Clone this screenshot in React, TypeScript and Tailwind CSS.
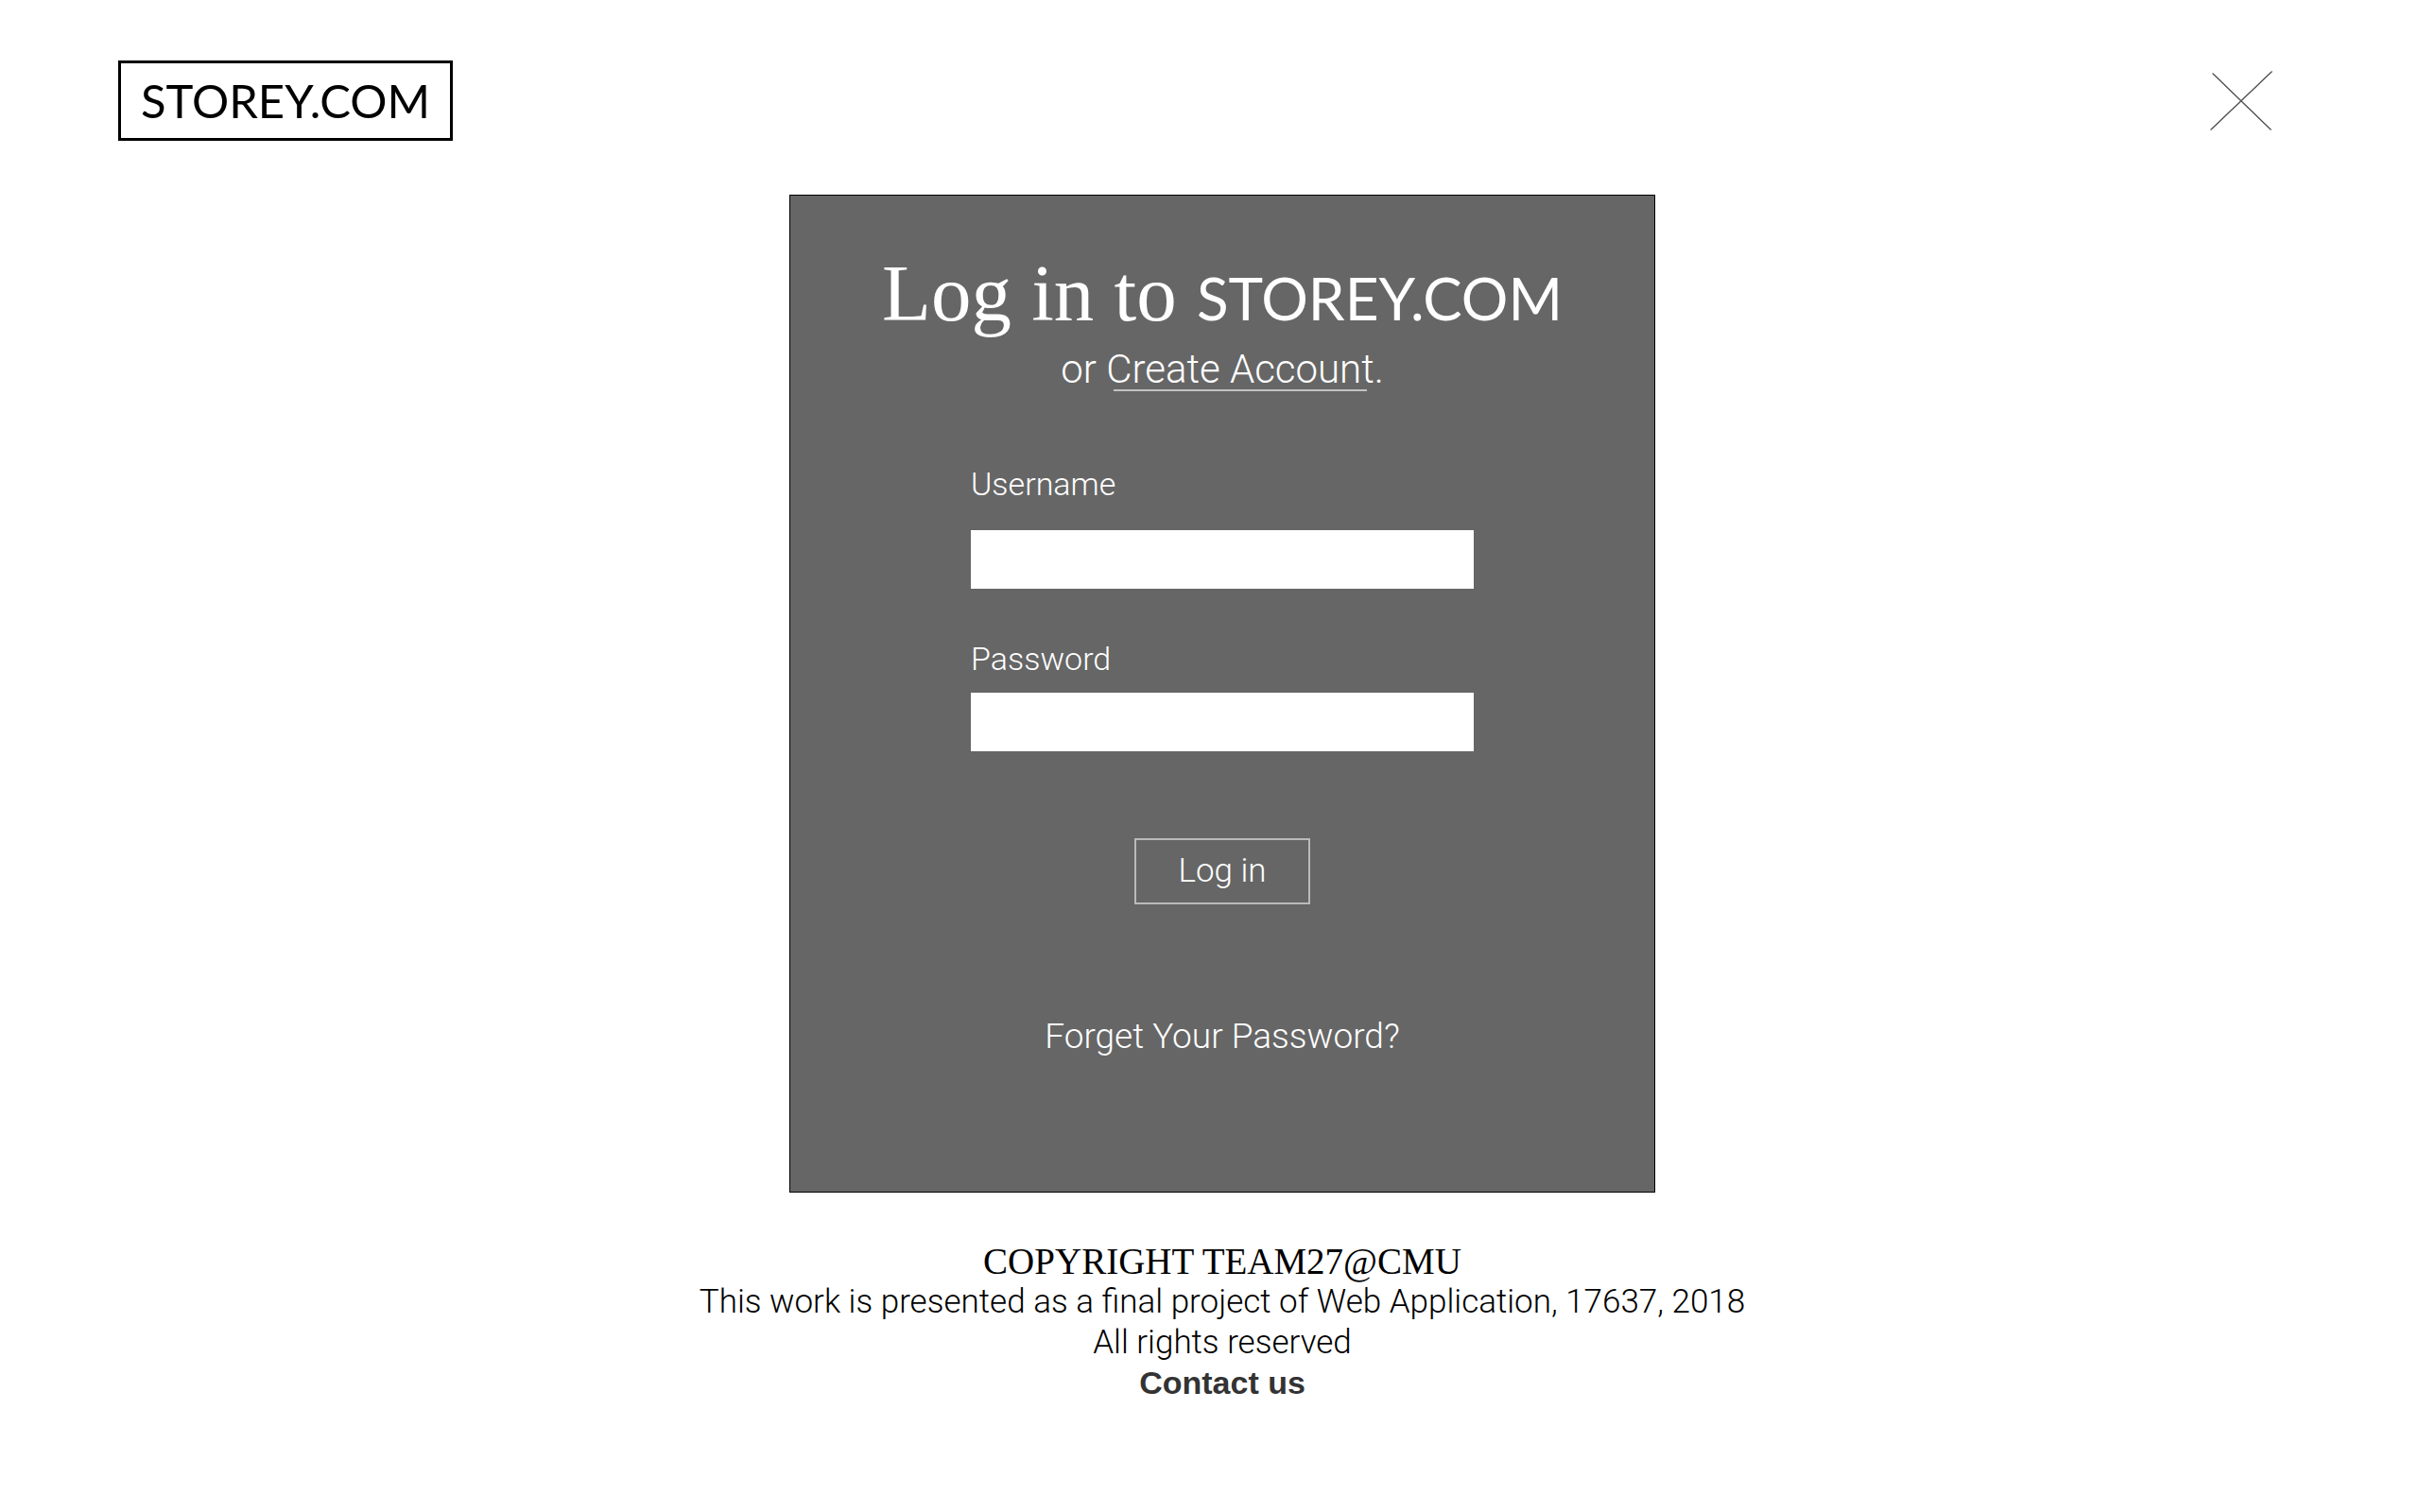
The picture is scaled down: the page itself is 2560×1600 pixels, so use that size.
function Header() {
  return (
    <header className="flex items-center justify-between pt-16 pr-[156px] pl-[125px]">
      <a
        href="#home"
        className="border-[3px] border-black px-[21px] font-['Lato',sans-serif] text-[49px] leading-[79px] font-normal text-black"
      >
        STOREY.COM
      </a>
      <button type="button" aria-label="Close" className="cursor-pointer">
        <svg width="66" height="64" viewBox="0 0 66 64" fill="none" stroke="#4d4d4d" strokeWidth="1.3">
          <path d="M2.5 2.5 64.5 62.5M.5 62.5 65.5.5" />
        </svg>
      </button>
    </header>
  );
}

function Field({ id, label, type, className }: { id: string; label: string; type: string; className: string }) {
  return (
    <div className={`flex flex-col ${className}`}>
      <label htmlFor={id} className="text-[34px] leading-10">
        {label}
      </label>
      <input id={id} name={id} type={type} className="h-[62px] w-full bg-white px-4 text-[34px] text-black outline-none" />
    </div>
  );
}

function LoginCard() {
  return (
    <section className="flex w-full max-w-[916px] flex-col items-center border border-black bg-[#666] pt-[55px] pb-[144px] text-white">
      <h1 className="font-['Liberation_Serif',serif] text-[85px] leading-[96px] font-normal whitespace-nowrap">
        Log in to <span className="font-['Lato',sans-serif] text-[62px] leading-none">STOREY.COM</span>
      </h1>
      <p className="mt-2 text-[42px] leading-[50px]">
        or{" "}
        <a
          href="#create-account"
          className="relative inline-block after:absolute after:inset-x-2 after:bottom-[2px] after:h-[2px] after:bg-white/60"
        >
          Create Account
        </a>
        .
      </p>
      <form className="mt-[76px] flex w-full max-w-[532px] flex-col" onSubmit={(e) => e.preventDefault()}>
        <Field id="username" label="Username" type="text" className="gap-[29px]" />
        <Field id="password" label="Password" type="password" className="mt-[54px] gap-4" />
        <button
          type="submit"
          className="mt-[92px] h-[70px] w-[186px] cursor-pointer self-center border-2 border-white/55 text-[35px] leading-10"
        >
          Log in
        </button>
      </form>
      <a href="#forget-password" className="mt-[120px] text-[37px] leading-10">
        Forget Your Password?
      </a>
    </section>
  );
}

function Footer() {
  return (
    <footer className="mt-[51px] text-center text-[35px] leading-[43px] text-black">
      <p className="font-['Liberation_Serif',serif] text-[39px] leading-[43px] font-normal">COPYRIGHT TEAM27@CMU</p>
      <p>This work is presented as a final project of Web Application, 17637, 2018</p>
      <p>All rights reserved</p>
      <a href="#contact" className="font-['Liberation_Sans',sans-serif] text-[34px] leading-[43px] font-bold text-[#333]">
        Contact us
      </a>
    </footer>
  );
}

export default function App() {
  return (
    <div className="min-h-screen bg-white font-['Roboto',sans-serif] font-light">
      <Header />
      <main className="mt-[57px] flex flex-col items-center pl-[26px]">
        <LoginCard />
        <Footer />
      </main>
    </div>
  );
}
